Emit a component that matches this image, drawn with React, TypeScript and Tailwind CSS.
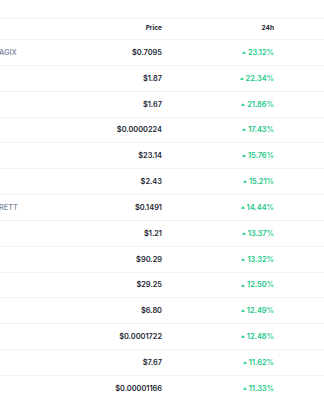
const rows = [
  { name: "AGIX", price: "$0.7095", change: "23.12%" },
  { name: "", price: "$1.87", change: "22.34%" },
  { name: "", price: "$1.67", change: "21.86%" },
  { name: "", price: "$0.0000224", change: "17.43%" },
  { name: "", price: "$23.14", change: "15.76%" },
  { name: "", price: "$2.43", change: "15.21%" },
  { name: "RETT", price: "$0.1491", change: "14.44%" },
  { name: "", price: "$1.21", change: "13.37%" },
  { name: "", price: "$90.29", change: "13.32%" },
  { name: "", price: "$29.25", change: "12.50%" },
  { name: "", price: "$6.80", change: "12.49%" },
  { name: "", price: "$0.0001722", change: "12.48%" },
  { name: "", price: "$7.67", change: "11.62%" },
  { name: "", price: "$0.00001166", change: "11.33%" },
];

const Caret = () => (
  <svg viewBox="0 0 6 4" className="mr-[2px] inline-block h-[3px] w-[4px]">
    <path d="M0 4 L3 0 L6 4 Z" fill="#16c784" />
  </svg>
);

export default function App() {
  return (
    <div
      className="h-[400px] w-[324px] overflow-hidden bg-white pt-[18px]"
      style={{ fontFamily: "Inter, 'Noto Sans', sans-serif" }}
    >
      {/* header */}
      <div className="flex h-[22px] items-center border-y border-[#eff2f5] text-[6.5px] font-bold text-[#222531]">
        <div className="w-[100px]" />
        <div className="w-[62px] text-right">Price</div>
        <div className="w-[112px] text-right">24h</div>
        <div className="flex-1" />
      </div>

      {/* rows */}
      {rows.map((r, i) => (
        <div
          key={i}
          className="flex h-[25.85px] items-center border-b border-[#eff2f5] text-[7.4px]"
        >
          <div className="-ml-[1px] w-[101px] font-medium text-[#7a8499]">{r.name}</div>
          <div className="w-[62px] text-right font-semibold text-[#222531]">{r.price}</div>
          <div className="flex w-[112px] items-center justify-end font-semibold text-[#16c784]">
            <Caret />
            {r.change}
          </div>
          <div className="flex-1" />
        </div>
      ))}
    </div>
  );
}
